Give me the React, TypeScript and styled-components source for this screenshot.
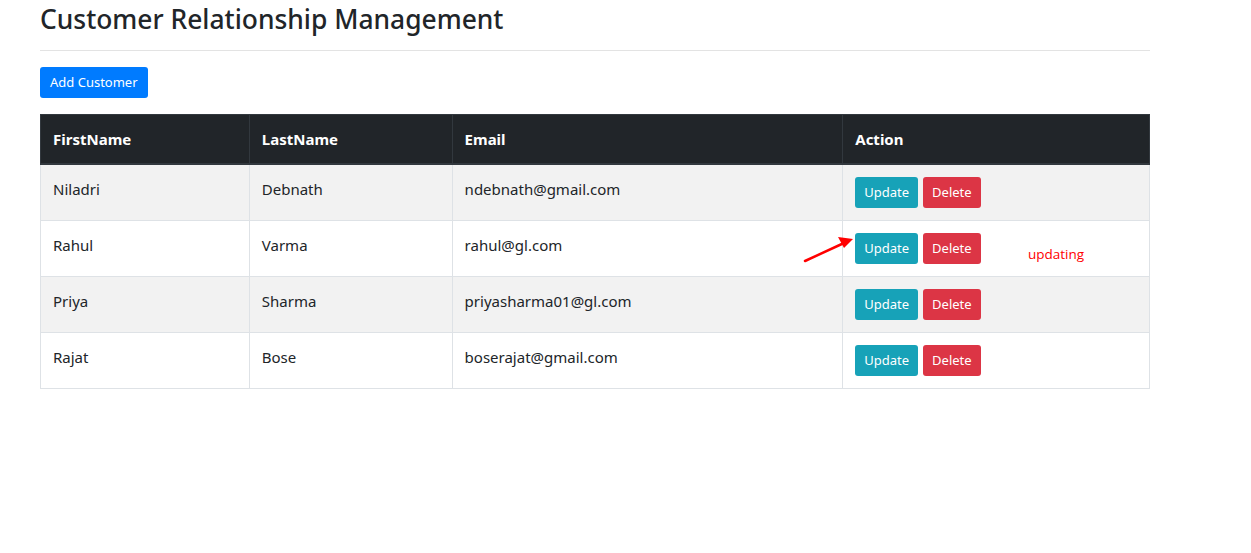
import React from "react";
import styled, { createGlobalStyle } from "styled-components";

const Global = createGlobalStyle`
  html, body { margin: 0; padding: 0; background: #fff; }
  body {
    font-family: "Noto Sans", "Open Sans", sans-serif;
    color: #212529;
    font-size: 16px;
    line-height: 1.5;
  }
  * { box-sizing: border-box; }
`;

const Page = styled.div`
  position: relative;
  width: 1251px;
  height: 553px;
  padding: 0 0 0 40px;
`;

const Container = styled.div`
  width: 1110px;
`;

const Title = styled.h2`
  margin: 0;
  font-size: 26.4px;
  font-weight: 500;
  line-height: 38px;
  color: #212529;
`;

const Rule = styled.hr`
  margin: 12px 0 16px;
  border: 0;
  border-top: 1px solid #e3e3e3;
`;

const Btn = styled.button<{ $variant: "primary" | "info" | "danger" }>`
  display: inline-block;
  font-family: inherit;
  font-size: 13px;
  line-height: 21px;
  padding: 4px 8px;
  border-radius: 3px;
  border: 1px solid transparent;
  color: #fff;
  cursor: pointer;
  background: ${(p) =>
    p.$variant === "primary" ? "#007bff" : p.$variant === "info" ? "#17a2b8" : "#dc3545"};
`;

const AddBtn = styled(Btn)`
  padding: 4px 9px;
`;

const Table = styled.table`
  margin-top: 16px;
  width: 1110px;
  border-collapse: collapse;
  font-size: 15px;
`;

const Th = styled.th<{ $w: number }>`
  width: ${(p) => p.$w}px;
  text-align: left;
  background: #212529;
  color: #fff;
  font-weight: 700;
  padding: 12px 12px;
  line-height: 24px;
  border: 1px solid #32383e;
  border-bottom: 2px solid #32383e;
  vertical-align: bottom;
`;

const Tr = styled.tr<{ $striped: boolean }>`
  background: ${(p) => (p.$striped ? "#f2f2f2" : "#fff")};
`;

const Td = styled.td`
  padding: 12px 12px;
  line-height: 24px;
  border: 1px solid #dee2e6;
  vertical-align: top;
  color: #212529;
`;

const Actions = styled.div`
  display: flex;
  gap: 5px;
`;

const Note = styled.span`
  position: absolute;
  left: 1028px;
  top: 245px;
  color: #ff0000;
  font-family: "Open Sans", sans-serif;
  font-size: 13.5px;
  line-height: 18px;
`;

const Arrow = styled.svg`
  position: absolute;
  left: 800px;
  top: 231px;
`;

const rows = [
  ["Niladri", "Debnath", "ndebnath@gmail.com"],
  ["Rahul", "Varma", "rahul@gl.com"],
  ["Priya", "Sharma", "priyasharma01@gl.com"],
  ["Rajat", "Bose", "boserajat@gmail.com"],
];

export default function App() {
  return (
    <>
      <Global />
      <Page>
        <Container>
          <Title>Customer Relationship Management</Title>
          <Rule />
          <AddBtn $variant="primary">Add Customer</AddBtn>
          <Table>
            <thead>
              <tr>
                <Th $w={209}>FirstName</Th>
                <Th $w={203}>LastName</Th>
                <Th $w={391}>Email</Th>
                <Th $w={307}>Action</Th>
              </tr>
            </thead>
            <tbody>
              {rows.map((r, i) => (
                <Tr key={i} $striped={i % 2 === 0}>
                  <Td>{r[0]}</Td>
                  <Td>{r[1]}</Td>
                  <Td>{r[2]}</Td>
                  <Td>
                    <Actions>
                      <Btn $variant="info">Update</Btn>
                      <Btn $variant="danger">Delete</Btn>
                    </Actions>
                  </Td>
                </Tr>
              ))}
            </tbody>
          </Table>
        </Container>
        <Arrow width="60" height="36" viewBox="0 0 60 36">
          <line x1="5" y1="30" x2="44" y2="12" stroke="#ff0000" strokeWidth="2.5" strokeLinecap="round" />
          <polygon points="53,8 38,6 44,17" fill="#ff0000" />
        </Arrow>
        <Note>updating</Note>
      </Page>
    </>
  );
}
